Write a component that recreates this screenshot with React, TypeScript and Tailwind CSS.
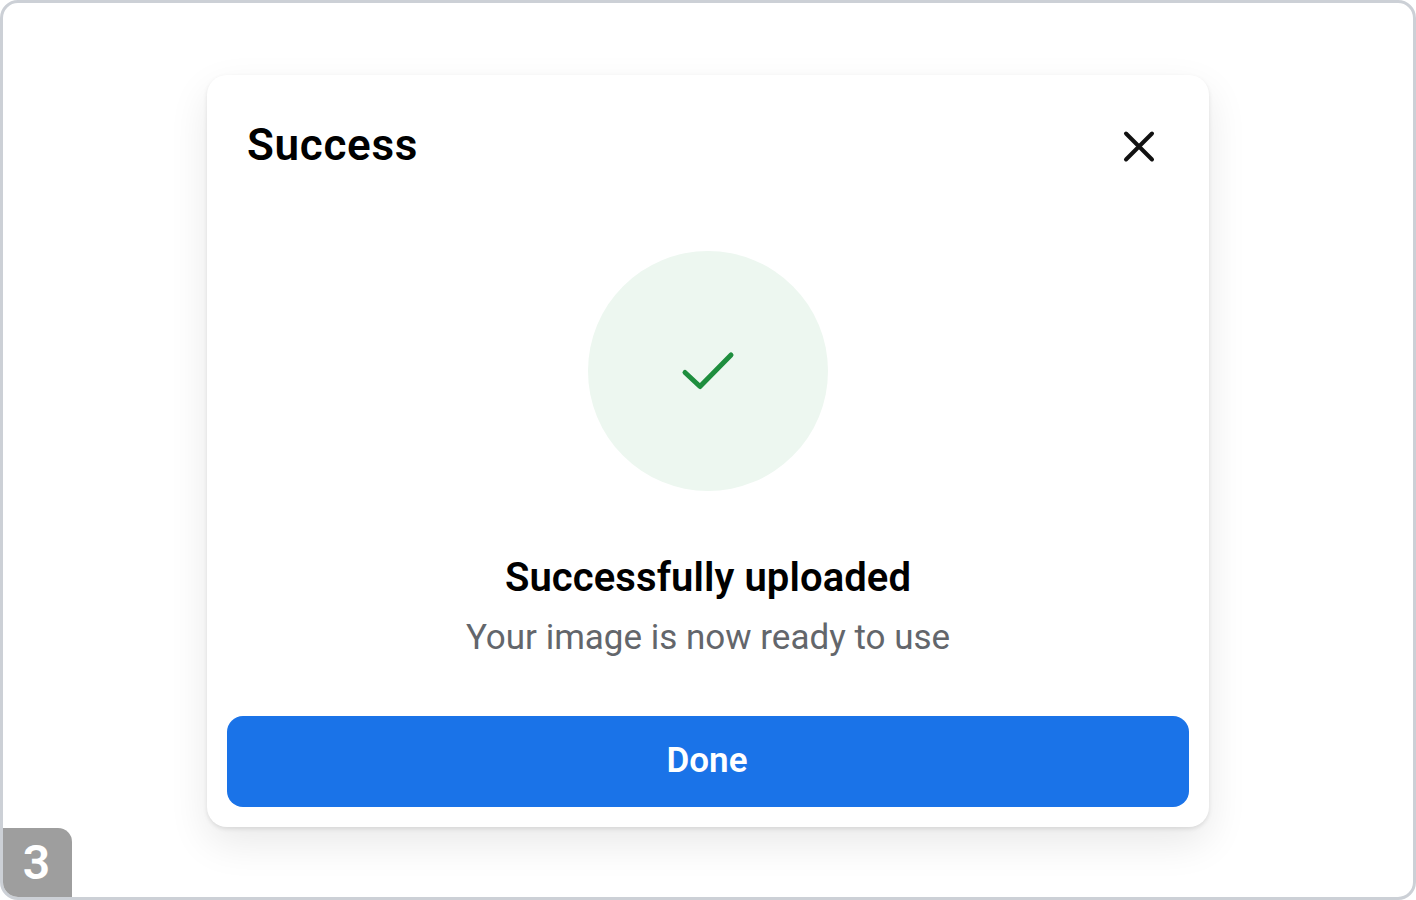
export default function App() {
  return (
    <div className="relative h-[900px] w-[1416px] overflow-hidden rounded-[18px] border-[3px] border-[#ccd0d6] bg-white font-['Roboto',sans-serif]">
      <div className="flex h-full w-full justify-center pt-[72px]">
        <div className="flex h-[752px] w-[1002px] flex-col rounded-[20px] bg-white px-5 shadow-[0_2px_4px_rgba(0,0,0,0.1),0_16px_40px_rgba(0,0,0,0.09)]">
          {/* Header */}
          <div className="flex h-[176px] items-start justify-between pl-5 pr-[33px] pt-[42px]">
            <h1 className="text-[44px] leading-[56px] font-semibold tracking-[0.7px] text-black">Success</h1>
            <button className="mt-[12px] text-[#111]">
              <svg width="34" height="34" viewBox="0 0 34 34" fill="none" stroke="currentColor" strokeWidth="4" strokeLinecap="round">
                <path d="M4 4.500 L30 30.500 M30 4.500 L4 30.500" />
              </svg>
            </button>
          </div>

          {/* Body */}
          <div className="flex flex-col items-center">
            <div className="flex h-[240px] w-[240px] items-center justify-center rounded-full bg-[#edf7f0]">
              <svg width="54" height="40" viewBox="0 0 54 40" fill="none" stroke="#1e8e3e" strokeWidth="5" strokeLinecap="round" strokeLinejoin="round">
                <path d="M4 21.500 L19 35.500 L50 4" />
              </svg>
            </div>
            <h2 className="mt-[61px] text-[40px] leading-[52px] font-semibold tracking-[0.1px] text-black">Successfully uploaded</h2>
            <p className="mt-[11px] text-[35px] leading-[46px] text-[#63666b]">Your image is now ready to use</p>
          </div>

          {/* Footer */}
          <button className="mt-[55px] h-[91px] w-full rounded-[16px] bg-[#1a73e8] pr-0.5 text-[35px] font-semibold text-white">Done</button>
        </div>
      </div>

      <div className="absolute bottom-0 left-0 flex h-[69px] w-[69px] items-center justify-center rounded-tr-[14px] bg-[#9e9e9e] pr-0.5 text-[48px] font-semibold text-white">
        3
      </div>
    </div>
  )
}
